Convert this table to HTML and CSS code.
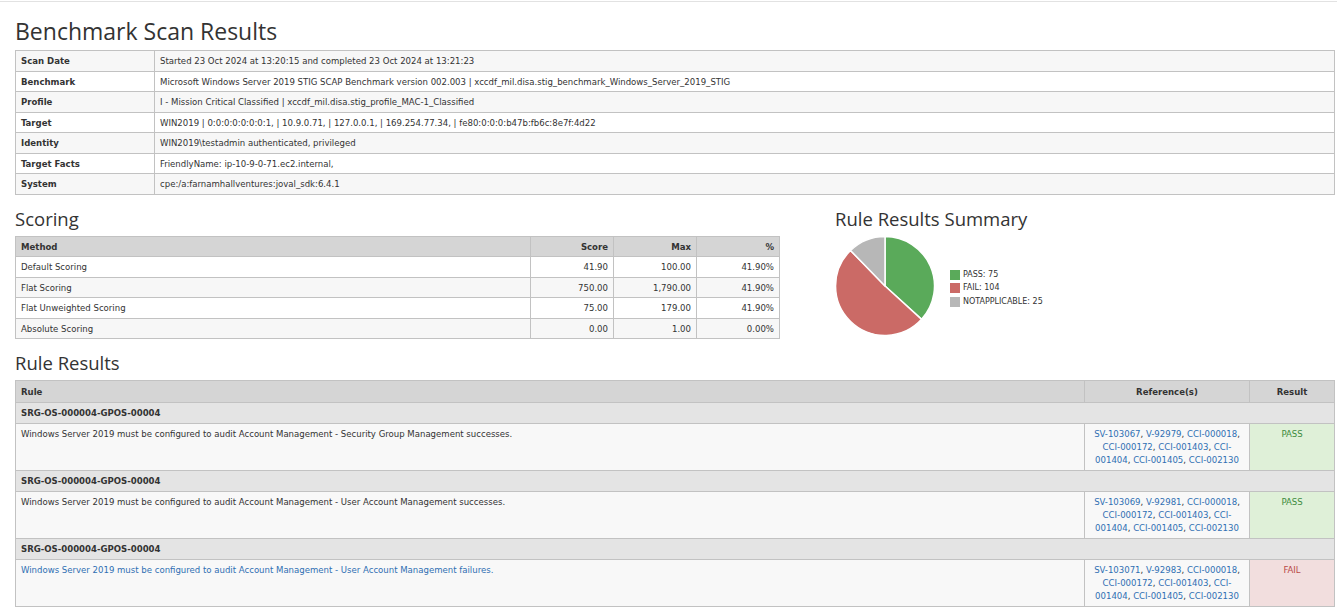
FILE: index.html
```html
<!DOCTYPE html>
<html lang="en">
<head>
<meta charset="utf-8">
<title>Benchmark Scan Results</title>
<link rel="stylesheet" href="styles.css">
</head>
<body>
<div class="topline"></div>
<div class="page">
  <h1 class="title">Benchmark Scan Results</h1>
  <table class="grid info">
    <colgroup><col class="c-label"><col></colgroup>
    <tbody>
      <tr><th>Scan Date</th><td>Started 23 Oct 2024 at 13:20:15 and completed 23 Oct 2024 at 13:21:23</td></tr>
      <tr><th>Benchmark</th><td>Microsoft Windows Server 2019 STIG SCAP Benchmark version 002.003 | xccdf_mil.disa.stig_benchmark_Windows_Server_2019_STIG</td></tr>
      <tr><th>Profile</th><td>I - Mission Critical Classified | xccdf_mil.disa.stig_profile_MAC-1_Classified</td></tr>
      <tr><th>Target</th><td>WIN2019 | 0:0:0:0:0:0:0:1, | 10.9.0.71, | 127.0.0.1, | 169.254.77.34, | fe80:0:0:0:b47b:fb6c:8e7f:4d22</td></tr>
      <tr><th>Identity</th><td>WIN2019\testadmin authenticated, privileged</td></tr>
      <tr><th>Target Facts</th><td>FriendlyName: ip-10-9-0-71.ec2.internal,</td></tr>
      <tr><th>System</th><td>cpe:/a:farnamhallventures:joval_sdk:6.4.1</td></tr>
    </tbody>
  </table>

  <div class="split">
    <section class="scoring">
      <h2 class="heading">Scoring</h2>
      <table class="grid score">
        <colgroup><col><col class="c-num"><col class="c-num"><col class="c-num"></colgroup>
        <tbody>
          <tr class="head"><th>Method</th><th class="num">Score</th><th class="num">Max</th><th class="num">%</th></tr>
          <tr><td>Default Scoring</td><td class="num">41.90</td><td class="num">100.00</td><td class="num">41.90%</td></tr>
          <tr><td>Flat Scoring</td><td class="num">750.00</td><td class="num">1,790.00</td><td class="num">41.90%</td></tr>
          <tr><td>Flat Unweighted Scoring</td><td class="num">75.00</td><td class="num">179.00</td><td class="num">41.90%</td></tr>
          <tr><td>Absolute Scoring</td><td class="num">0.00</td><td class="num">1.00</td><td class="num">0.00%</td></tr>
        </tbody>
      </table>
    </section>
    <section class="summary">
      <h2 class="heading">Rule Results Summary</h2>
      <div class="chart">
        <svg class="pie" width="100" height="100" viewBox="0 0 100 100">
          <path d="M50,50 L50,0.5 A49.5,49.5 0 0 1 86.59,83.34 Z" fill="#5aaa5a" stroke="#fff" stroke-width="1.5" stroke-linejoin="round"/>
          <path d="M50,50 L86.59,83.34 A49.5,49.5 0 1 1 15.54,14.46 Z" fill="#cb6a66" stroke="#fff" stroke-width="1.5" stroke-linejoin="round"/>
          <path d="M50,50 L15.54,14.46 A49.5,49.5 0 0 1 50,0.5 Z" fill="#b7b7b7" stroke="#fff" stroke-width="1.5" stroke-linejoin="round"/>
        </svg>
        <ul class="legend">
          <li><span class="sw sw-pass"></span>PASS: 75</li>
          <li><span class="sw sw-fail"></span>FAIL: 104</li>
          <li><span class="sw sw-na"></span>NOTAPPLICABLE: 25</li>
        </ul>
      </div>
    </section>
  </div>

  <h2 class="heading">Rule Results</h2>
  <table class="grid rules">
    <colgroup><col><col class="c-ref"><col class="c-res"></colgroup>
    <tbody>
      <tr class="head"><th>Rule</th><th class="center">Reference(s)</th><th class="center">Result</th></tr>
      <tr class="group"><th colspan="3">SRG-OS-000004-GPOS-00004</th></tr>
      <tr class="rule">
        <td>Windows Server 2019 must be configured to audit Account Management - Security Group Management successes.</td>
        <td class="refs">
          <span class="ref-line"><a href="#">SV-103067</a>, <a href="#">V-92979</a>, <a href="#">CCI-000018</a>,</span>
          <span class="ref-line"><a href="#">CCI-000172</a>, <a href="#">CCI-001403</a>, <a href="#">CCI-</a></span>
          <span class="ref-line"><a href="#">001404</a>, <a href="#">CCI-001405</a>, <a href="#">CCI-002130</a></span>
        </td>
        <td class="res pass">PASS</td>
      </tr>
      <tr class="group"><th colspan="3">SRG-OS-000004-GPOS-00004</th></tr>
      <tr class="rule">
        <td>Windows Server 2019 must be configured to audit Account Management - User Account Management successes.</td>
        <td class="refs">
          <span class="ref-line"><a href="#">SV-103069</a>, <a href="#">V-92981</a>, <a href="#">CCI-000018</a>,</span>
          <span class="ref-line"><a href="#">CCI-000172</a>, <a href="#">CCI-001403</a>, <a href="#">CCI-</a></span>
          <span class="ref-line"><a href="#">001404</a>, <a href="#">CCI-001405</a>, <a href="#">CCI-002130</a></span>
        </td>
        <td class="res pass">PASS</td>
      </tr>
      <tr class="group"><th colspan="3">SRG-OS-000004-GPOS-00004</th></tr>
      <tr class="rule">
        <td><a href="#">Windows Server 2019 must be configured to audit Account Management - User Account Management failures.</a></td>
        <td class="refs">
          <span class="ref-line"><a href="#">SV-103071</a>, <a href="#">V-92983</a>, <a href="#">CCI-000018</a>,</span>
          <span class="ref-line"><a href="#">CCI-000172</a>, <a href="#">CCI-001403</a>, <a href="#">CCI-</a></span>
          <span class="ref-line"><a href="#">001404</a>, <a href="#">CCI-001405</a>, <a href="#">CCI-002130</a></span>
        </td>
        <td class="res fail">FAIL</td>
      </tr>
    </tbody>
  </table>
</div>
</body>
</html>
```

FILE: styles.css
```css
html, body {
  margin: 0;
  padding: 0;
  background: #fff;
}

body {
  font-family: "DejaVu Sans Condensed", "Liberation Sans", sans-serif;
  font-size: 9.5px;
  color: #333;
}

.topline {
  margin-top: 1px;
  border-top: 1px solid #e2e2e2;
}

.page {
  padding: 0 2px 0 15px;
}

.title {
  font-family: "Open Sans", "Liberation Sans", sans-serif;
  font-weight: 400;
  font-size: 23px;
  line-height: 30px;
  color: #333;
  margin: 14px 0 4px;
}

.heading {
  font-family: "Open Sans", "Liberation Sans", sans-serif;
  font-weight: 400;
  font-size: 18.5px;
  line-height: 24px;
  color: #333;
  margin: 12px 0 5px;
}

.grid {
  width: 100%;
  border-collapse: collapse;
  table-layout: fixed;
  border: 1px solid #c2c2c2;
}

.grid th,
.grid td {
  border: 1px solid #c2c2c2;
  padding: 3px 5px;
  line-height: 13.5px;
  text-align: left;
  vertical-align: top;
  white-space: nowrap;
  overflow: hidden;
}

.grid th {
  font-weight: bold;
}

.info .c-label { width: 139px; }

.info tr:nth-child(odd) { background: #f7f7f7; }
.info tr:nth-child(even) { background: #fff; }

.split {
  display: flex;
  align-items: flex-start;
}

.scoring {
  width: 765px;
  flex: none;
}

.summary {
  margin-left: 55px;
}

.score .c-num { width: 83px; }

.score tr.head { background: #d5d5d5; }
.score tr:nth-child(odd):not(.head) { background: #f7f7f7; }
.score tr:nth-child(even) { background: #fff; }

.num { text-align: right !important; }
.center { text-align: center !important; }

.chart {
  display: flex;
  align-items: center;
  margin-top: 1px;
}

.pie {
  display: block;
  flex: none;
}

.legend {
  list-style: none;
  margin: 0 0 0 15px;
  padding: 5px 0 0;
  font-size: 8.9px;
  line-height: 13.5px;
}

.legend li {
  display: flex;
  align-items: center;
}

.sw {
  width: 10px;
  height: 10px;
  margin-right: 3px;
  flex: none;
}

.sw-pass { background: #5aaa5a; }
.sw-fail { background: #cb6a66; }
.sw-na { background: #b7b7b7; }

.rules .c-ref { width: 165px; }
.rules .c-res { width: 85px; }

.rules tr.head { background: #d5d5d5; }
.rules tr.head th {
  padding-top: 4px;
  padding-bottom: 3.5px;
}

.rules tr.group { background: #e4e4e4; }
.rules tr.group th {
  padding-top: 3px;
  padding-bottom: 3.5px;
}

.rules tr.rule td {
  background: #f8f8f8;
  line-height: 13px;
  padding: 3px 5px 4px;
}

.rules tr.rule td.refs {
  white-space: nowrap;
  text-align: center;
}

.ref-line {
  display: block;
}

.rules tr.rule td.res {
  text-align: center;
}

.rules tr.rule td.pass {
  background: #dff0d8;
  color: #3d8b3d;
}

.rules tr.rule td.fail {
  background: #f2dede;
  color: #b94a48;
}

a {
  color: #2f6fb3;
  text-decoration: none;
}
```
